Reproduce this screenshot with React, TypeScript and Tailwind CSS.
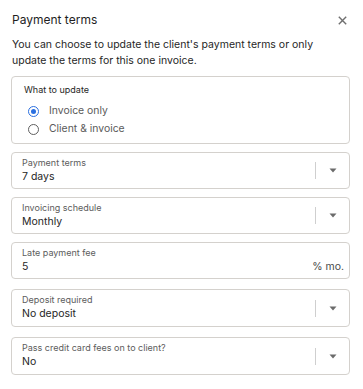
import React from "react";

type SelectFieldProps = {
  label: string;
  value: string;
  className?: string;
};

const Chevron = () => (
  <svg width="8" height="5" viewBox="0 0 8 5" className="block">
    <path d="M0.5 0.5 L7.5 0.5 L4 4.5 Z" fill="#6b6b6b" />
  </svg>
);

const SelectField: React.FC<SelectFieldProps> = ({ label, value, className }) => (
  <div
    className={`flex items-center rounded-[4px] border border-[#d4d1cd] bg-white ${className ?? ""}`}
  >
    <div className="flex-1 min-w-0 self-start pl-[10px] pt-[4px]">
      <div className="text-[9px] leading-[12px] text-[#5c5c5c]">{label}</div>
      <div className="text-[10.5px] leading-[14px] text-[#262626] mt-px">{value}</div>
    </div>
    <div className="w-px h-[17px] bg-[#cfcfcf]" />
    <div className="w-[33px] flex justify-center">
      <Chevron />
    </div>
  </div>
);

const Radio = ({ checked, label }: { checked: boolean; label: string }) => (
  <label className="flex items-center h-[18px] gap-[10px]">
    {checked ? (
      <span className="w-[11px] h-[11px] rounded-full border-[1.5px] border-[#2b6fe0] flex items-center justify-center">
        <span className="w-[5px] h-[5px] rounded-full bg-[#2b6fe0]" />
      </span>
    ) : (
      <span className="w-[11px] h-[11px] rounded-full border border-[#5f5f5f]" />
    )}
    <span className="text-[10.4px] text-[#5a5a5a]">{label}</span>
  </label>
);

export default function App() {
  return (
    <div
      className="w-[363px] h-[389px] bg-white overflow-hidden"
      style={{ fontFamily: "Inter, 'Noto Sans', sans-serif" }}
    >
      <div className="flex items-center justify-between pl-3 pr-[16px] pt-[13px]">
        <h2 className="text-[12px] leading-[14px] text-[#1f1f1f]">Payment terms</h2>
        <svg width="9" height="9" viewBox="0 0 9 9">
          <path d="M0.8 0.8 L8.2 8.2 M8.2 0.8 L0.8 8.2" stroke="#6f6f6f" strokeWidth="1.4" />
        </svg>
      </div>

      <p className="pl-3 w-[334px] mt-[10px] text-[10.5px] leading-[16px] text-[#262626]">
        You can choose to update the client's payment terms or only update the terms for this one
        invoice.
      </p>

      <div className="ml-[11px] w-[339px]">
        <div className="mt-[7px] h-[68px] rounded-[4px] border border-[#d4d1cd] pl-[12px] pt-[7px]">
          <div className="text-[9px] leading-[12px] text-[#262626]">What to update</div>
          <div className="mt-[6px] pl-[4px]">
            <Radio checked label="Invoice only" />
            <Radio checked={false} label="Client & invoice" />
          </div>
        </div>

        <SelectField className="mt-[8px] h-[37px]" label="Payment terms" value="7 days" />
        <SelectField className="mt-[8px] h-[37px]" label="Invoicing schedule" value="Monthly" />

        <div className="mt-[8px] h-[37px] rounded-[4px] border border-[#d4d1cd] pl-[10px] pr-[5px] pt-[4px]">
          <div className="text-[9px] leading-[12px] text-[#5c5c5c]">Late payment fee</div>
          <div className="flex items-center justify-between mt-px">
            <span className="text-[10.5px] leading-[14px] text-[#262626]">5</span>
            <span className="text-[10.5px] leading-[14px] text-[#4a4a4a]">% mo.</span>
          </div>
        </div>

        <SelectField className="mt-[10px] h-[38px]" label="Deposit required" value="No deposit" />
        <SelectField
          className="mt-[10px] h-[38px]"
          label="Pass credit card fees on to client?"
          value="No"
        />
      </div>
    </div>
  );
}
